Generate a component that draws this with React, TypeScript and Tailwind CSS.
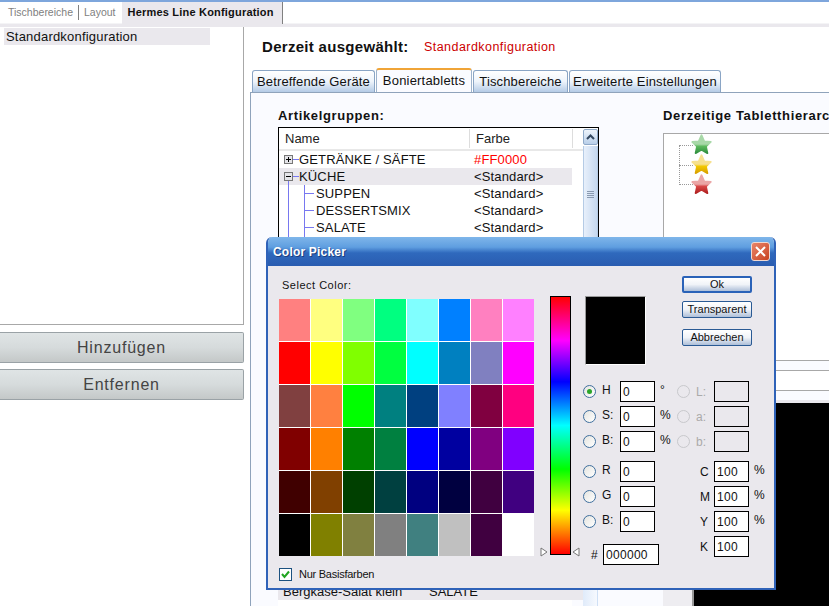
import type { ReactNode } from "react";

const swatches = [
  ["#ff8080", "#ffff80", "#80ff80", "#00ff80", "#80ffff", "#0080ff", "#ff80c0", "#ff80ff"],
  ["#ff0000", "#ffff00", "#80ff00", "#00ff40", "#00ffff", "#0080c0", "#8080c0", "#ff00ff"],
  ["#804040", "#ff8040", "#00ff00", "#008080", "#004080", "#8080ff", "#800040", "#ff0080"],
  ["#800000", "#ff8000", "#008000", "#008040", "#0000ff", "#0000a0", "#800080", "#8000ff"],
  ["#400000", "#804000", "#004000", "#004040", "#000080", "#000040", "#400040", "#400080"],
  ["#000000", "#808000", "#808040", "#808080", "#408080", "#c0c0c0", "#400040", "#ffffff"],
];

function Star({ id, light, mid, dark }: { id: string; light: string; mid: string; dark: string }) {
  return (
    <svg width="23" height="23" viewBox="0 0 21 21">
      <defs>
        <linearGradient id={id} x1="0" y1="0" x2="0" y2="1">
          <stop offset="0" stopColor={light} />
          <stop offset="0.5" stopColor={light} />
          <stop offset="0.62" stopColor={mid} />
          <stop offset="1" stopColor={dark} />
        </linearGradient>
      </defs>
      <path
        d="M10.5 2 L13 7.6 L19 8.2 L14.6 12.3 L15.9 18.4 L10.5 15.3 L5.1 18.4 L6.4 12.3 L2 8.2 L8 7.6 Z"
        fill={`url(#${id})`}
        stroke={`url(#${id})`}
        strokeWidth="1.6"
        strokeLinejoin="round"
      />
    </svg>
  );
}

function TopTab({ label, active }: { label: string; active?: boolean }) {
  if (active) {
    return (
      <div className="flex h-[22px] w-[161px] items-center border-r border-[#808080] bg-[#eae8ed] pl-[6px] text-[11px] font-bold tracking-[0.2px] text-[#111]">
        {label}
      </div>
    );
  }
  return <span className="text-[10.5px] text-[#808080]">{label}</span>;
}

function PanelTab({ label, width, active }: { label: string; width: number; active?: boolean }) {
  return (
    <div
      style={{ width }}
      className={
        active
          ? "flex h-[24px] items-start justify-center rounded-t-[3px] border-x border-t-2 border-x-[#9db3cc] border-t-[#f0a437] bg-[#fafbff] pt-[1px] text-[13px] tracking-[0.2px] text-[#111]"
          : "flex h-[22px] items-center justify-center rounded-t-[3px] border border-b-0 border-[#8aa5c5] bg-gradient-to-b from-white via-[#eef4fb] to-[#b4cbe6] text-[13px] tracking-[0.15px] text-[#111]"
      }
    >
      {label}
    </div>
  );
}

function BigButton({ label }: { label: string }) {
  return (
    <div className="flex h-[31px] items-center justify-center rounded-r-[2px] border border-l-0 border-[#9aa2a6] bg-gradient-to-b from-[#dfe4e5] via-[#d6dbdc] to-[#c4c8c8] text-[16px] tracking-[0.8px] text-[#444]">
      {label}
    </div>
  );
}

function TreeRow({
  label,
  color,
  level,
  toggle,
  selected,
  red,
}: {
  label?: string;
  color?: string;
  level: number;
  toggle?: string;
  selected?: boolean;
  red?: boolean;
}) {
  return (
    <div className={`relative flex h-[17px] w-[293px] items-center text-[13px] tracking-[0.15px] ${selected ? "bg-[#eae8ed]" : ""}`}>
      {toggle === "-" && <span className="absolute left-[9px] top-[9px] h-[8px] w-px bg-[#7878f0]" />}
      {level === 1 && (
        <>
          <span className="absolute left-[9px] top-0 h-[17px] w-px bg-[#7878f0]" />
          <span className="absolute left-[25px] top-0 h-[17px] w-px bg-[#7878f0]" />
          <span className="absolute left-[25px] top-[8px] h-px w-[10px] bg-[#7878f0]" />
        </>
      )}
      {toggle && (
        <>
          <span className="absolute left-[5px] top-[4px] flex h-[9px] w-[9px] items-center justify-center border border-[#777] bg-[#e4e4e8]">
            <span className="h-px w-[5px] bg-black" />
            {toggle === "+" && <span className="absolute h-[5px] w-px bg-black" />}
          </span>
          <span className="absolute left-[14px] top-[8px] h-px w-[6px] bg-[#7878f0]" />
        </>
      )}
      <span className={`w-[195px] shrink-0 whitespace-nowrap text-[#111] ${level === 1 ? "pl-[37px]" : "pl-[20px]"}`}>
        {label}
      </span>
      <span className={red ? "text-[#ff0000]" : "text-[#111]"}>{color}</span>
    </div>
  );
}

function Radio({ checked, disabled }: { checked?: boolean; disabled?: boolean }) {
  return (
    <span
      className={
        disabled
          ? "flex h-[13px] w-[13px] shrink-0 rounded-full border border-[#c8c8cc] bg-[#eae8ed]"
          : "flex h-[13px] w-[13px] shrink-0 items-center justify-center rounded-full border border-[#3f6f9e] bg-gradient-to-br from-[#e4e4e0] to-white"
      }
    >
      {checked && <span className="h-[5px] w-[5px] rounded-full bg-[#2aa52a]" />}
    </span>
  );
}

function Field({ value, className }: { value?: string; className?: string }) {
  return (
    <div className={`flex h-[21px] shrink-0 items-center border border-black pl-[2px] text-[12px] tracking-[0.3px] text-[#111] ${className ?? "w-[35px] bg-white"}`}>
      {value}
    </div>
  );
}

function ColorRow({ label, value, unit, checked }: { label: string; value: string; unit?: string; checked?: boolean }) {
  return (
    <div className="flex h-[21px] items-center">
      <Radio checked={checked} />
      <span className="w-[24px] shrink-0 pb-[3px] pl-[6px] text-[12px] text-[#111]">{label}</span>
      <Field value={value} />
      <span className="-mt-[4px] pl-[5px] text-[12px] text-[#111]">{unit}</span>
    </div>
  );
}

function DisabledRow({ label }: { label: string }) {
  return (
    <div className="flex h-[21px] items-center">
      <Radio disabled />
      <span className="w-[24px] shrink-0 pl-[6px] text-[12px] text-[#aaa]">{label}</span>
      <Field className="w-[35px] bg-[#eae8ed]" />
    </div>
  );
}

function CmykRow({ label, unit }: { label: string; unit?: string }) {
  return (
    <div className="flex h-[21px] items-center">
      <span className="w-[37px] shrink-0 pl-[23px] text-[12px] text-[#111]">{label}</span>
      <Field value="100" />
      <span className="-mt-[4px] pl-[5px] text-[12px] text-[#111]">{unit}</span>
    </div>
  );
}

function DialogButton({ children, primary }: { children: ReactNode; primary?: boolean }) {
  return (
    <div
      className={`flex h-[17px] w-[70px] items-center justify-center rounded-[2px] bg-gradient-to-b from-white via-[#f0f3f8] to-[#aebfd8] text-[11px] text-[#111] ${
        primary ? "border-2 border-[#2a62b8]" : "border border-[#2a5a94]"
      }`}
    >
      {children}
    </div>
  );
}

function ColorPicker() {
  return (
    <div className="absolute left-[266px] top-[237px] h-[353px] w-[510px] overflow-hidden rounded-t-[6px] border-2 border-t-0 border-[#2f62b8] bg-[#eae8ed] font-['Liberation_Sans',sans-serif]">
      <div className="flex h-[29px] items-center justify-between bg-[linear-gradient(#7fb6ea_0%,#5f9ee0_35%,#2f69bd_55%,#2a5cb0_100%)] pl-[5px] pr-[4px]">
        <span className="text-[12px] font-bold tracking-[0.2px] text-white [text-shadow:1px_1px_0_#1d3f7f]">Color Picker</span>
        <div className="flex h-[19px] w-[19px] items-center justify-center rounded-[3px] border border-[#f0d8d0] bg-gradient-to-br from-[#e8846a] to-[#c8401c]">
          <svg width="11" height="11" viewBox="0 0 11 11">
            <path d="M1 1 L10 10 M10 1 L1 10" stroke="white" strokeWidth="2" />
          </svg>
        </div>
      </div>
      <div className="flex pl-[11px]">
        <div className="w-[255px] shrink-0">
          <div className="flex h-[33px] items-center pl-[3px] pt-[6px] text-[11px] tracking-[0.5px] text-[#111]">Select Color:</div>
          <div className="grid grid-cols-8 gap-px bg-white">
            {swatches.flat().map((color, i) => (
              <div key={i} style={{ backgroundColor: color }} className="h-[42px]" />
            ))}
          </div>
          <div className="mt-[10px] flex items-center gap-[7px]">
            <span className="flex h-[13px] w-[13px] items-center justify-center border border-[#1c5180] bg-white">
              <svg width="9" height="9" viewBox="0 0 9 9">
                <path d="M1 4 L3.5 7 L8 1.5" fill="none" stroke="#22a522" strokeWidth="2" />
              </svg>
            </span>
            <span className="text-[11px] tracking-[-0.25px] text-[#111]">Nur Basisfarben</span>
          </div>
        </div>
        <div className="relative ml-[16px] mt-[30px] h-[259px] w-[21px] shrink-0 border border-black bg-[linear-gradient(#ff0000_0%,#ff00ff_17%,#0000ff_33%,#00ffff_50%,#00ff00_67%,#ffff00_83%,#ff0000_100%)]">
          <svg className="absolute -left-[11px] bottom-[-3px]" width="9" height="10" viewBox="0 0 9 10">
            <path d="M1 1 L7 5 L1 9 Z" fill="white" stroke="#777" />
          </svg>
          <svg className="absolute -right-[10px] bottom-[-3px]" width="9" height="10" viewBox="0 0 9 10">
            <path d="M8 1 L2 5 L8 9 Z" fill="white" stroke="#777" />
          </svg>
        </div>
        <div className="ml-[12px] mt-[10px] w-[190px] shrink-0">
          <div className="flex h-[105px]">
            <div className="ml-[2px] mt-[20px] h-[69px] w-[61px] border border-[#999] border-b-white border-r-white bg-black" />
            <div className="ml-[36px] flex flex-col">
              <DialogButton primary>Ok</DialogButton>
              <div className="mt-[8px]">
                <DialogButton>Transparent</DialogButton>
              </div>
              <div className="mt-[11px]">
                <DialogButton>Abbrechen</DialogButton>
              </div>
            </div>
          </div>
          <div className="flex">
            <div className="w-[94px] shrink-0">
              <div className="flex flex-col gap-[4px]">
                <ColorRow label="H" value="0" unit="°" checked />
                <ColorRow label="S:" value="0" unit="%" />
                <ColorRow label="B:" value="0" unit="%" />
              </div>
              <div className="mt-[9px] flex flex-col gap-[4px]">
                <ColorRow label="R" value="0" />
                <ColorRow label="G" value="0" />
                <ColorRow label="B:" value="0" />
              </div>
              <div className="mt-[12px] flex items-center pl-[8px]">
                <span className="w-[12px] text-[12px] text-[#111]">#</span>
                <Field value="000000" className="w-[56px] bg-white" />
              </div>
            </div>
            <div>
              <div className="flex flex-col gap-[4px]">
                <DisabledRow label="L:" />
                <DisabledRow label="a:" />
                <DisabledRow label="b:" />
              </div>
              <div className="mt-[9px] flex flex-col gap-[4px]">
                <CmykRow label="C" unit="%" />
                <CmykRow label="M" unit="%" />
                <CmykRow label="Y" unit="%" />
                <CmykRow label="K" />
              </div>
            </div>
          </div>
        </div>
      </div>
    </div>
  );
}

export default function App() {
  return (
    <div className="relative h-[606px] w-[829px] overflow-hidden bg-white font-['Liberation_Sans',sans-serif]">
      <div className="h-[2px] bg-[#7ea6dc]" />
      <div className="flex h-[22px] items-center border-b border-[#f4f4f6] pl-[8px]">
        <TopTab label="Tischbereiche" />
        <span className="mx-[5px] h-[15px] w-px bg-[#808080]" />
        <TopTab label="Layout" />
        <div className="ml-[6px]">
          <TopTab label="Hermes Line Konfiguration" active />
        </div>
      </div>
      <div className="h-[3px] bg-[#eae8ed]" />
      <div className="flex h-[579px]">
        <div className="w-[244px] shrink-0">
          <div className="h-[298px] border-b border-r border-[#a8a8a8] pl-[4px] pt-px">
            <div className="flex h-[17px] w-[206px] items-center bg-[#eae8ed] pl-[2px] text-[13px] tracking-[0.2px] text-[#111]">Standardkonfiguration</div>
          </div>
          <div className="mt-[7px] flex flex-col gap-[6px]">
            <BigButton label="Hinzufügen" />
            <BigButton label="Entfernen" />
          </div>
        </div>
        <div className="ml-[6px] flex min-w-0 flex-1 flex-col">
          <div className="flex h-[41px] shrink-0 items-center pl-[12px]">
            <span className="w-[162px] text-[15px] font-bold tracking-[0.3px] text-[#111]">Derzeit ausgewählt:</span>
            <span className="text-[12.5px] tracking-[0.45px] text-[#cc0000]">Standardkonfiguration</span>
          </div>
          <div className="flex h-[24px] shrink-0 items-end gap-px pl-[2px]">
            <PanelTab label="Betreffende Geräte" width={123} />
            <PanelTab label="Boniertabletts" width={96} active />
            <PanelTab label="Tischbereiche" width={95} />
            <PanelTab label="Erweiterte Einstellungen" width={152} />
          </div>
          <div className="flex min-h-0 flex-1 border-l border-t border-[#8fa3bb] bg-[#fafbff] pl-[27px] pt-[13px]">
            <div className="w-[321px] shrink-0">
              <div className="flex h-[21px] items-start text-[13px] font-bold tracking-[0.65px] text-[#111]">Artikelgruppen:</div>
              <div className="flex h-[380px] border border-black bg-white">
                <div className="w-[303px] shrink-0">
                  <div className="flex h-[23px] w-[304px] items-center border-b-2 border-[#e8e8e8] text-[13px] text-[#222]">
                    <span className="w-[191px] border-r border-[#ddd] pl-[6px]">Name</span>
                    <span className="w-[103px] border-r border-[#ddd] pl-[6px]">Farbe</span>
                  </div>
                  <TreeRow label="GETRÄNKE / SÄFTE" color="#FF0000" level={0} toggle="+" red />
                  <TreeRow label="KÜCHE" color="<Standard>" level={0} toggle="-" selected />
                  <TreeRow label="SUPPEN" color="<Standard>" level={1} />
                  <TreeRow label="DESSERTSMIX" color="<Standard>" level={1} />
                  <TreeRow label="SALATE" color="<Standard>" level={1} />
                  <TreeRow level={1} />
                </div>
                <div className="ml-px w-[15px] shrink-0">
                  <div className="mt-px flex h-[16px] items-center justify-center rounded-[2px] border border-[#8fa9c8] bg-gradient-to-b from-[#eef4fb] to-[#b9cfe9]">
                    <svg width="9" height="6" viewBox="0 0 9 6">
                      <path d="M1 5 L4.5 1.5 L8 5" fill="none" stroke="#33475f" strokeWidth="2" />
                    </svg>
                  </div>
                  <div className="relative mt-px h-[340px] border-x border-[#b5cbe5] bg-gradient-to-r from-[#e8f0fb] to-[#c6d8ef]">
                    <div className="absolute left-[3px] top-[45px] flex w-[7px] flex-col gap-px">
                      <span className="h-px bg-[#8a9ab0]" />
                      <span className="h-px bg-[#8a9ab0]" />
                      <span className="h-px bg-[#8a9ab0]" />
                      <span className="h-px bg-[#8a9ab0]" />
                    </div>
                  </div>
                </div>
              </div>
              <div className="mt-[76px] flex">
                <div className="w-[305px] shrink-0">
                  <div className="flex h-[17px] items-center bg-[#eae8ed] pl-[5px] text-[13px] text-[#111]">
                    <span className="w-[146px] whitespace-nowrap">Bergkäse-Salat klein</span>
                    <span>SALATE</span>
                  </div>
                  <div className="h-[10px] w-[294px] bg-white" />
                </div>
                <div className="h-[30px] w-[15px] shrink-0 border-r border-[#cfe0f5] bg-gradient-to-r from-[#e0ebfa] to-[#f6f9fe]" />
              </div>
            </div>
            <div className="ml-[64px] min-w-0 flex-1">
              <div className="flex h-[27px] items-start whitespace-nowrap text-[13px] font-bold tracking-[0.65px] text-[#111]">Derzeitige Tabletthierarchie</div>
              <div className="relative h-[227px] border-l border-t border-[#a8a8a8] bg-white">
                <div className="absolute left-[15px] top-[11px] h-[40px] w-[14px] border-y border-l border-dotted border-[#999]" />
                <div className="absolute left-[15px] top-[31px] h-0 w-[14px] border-t border-dotted border-[#999]" />
                <div className="absolute -top-px left-[26px] flex flex-col">
                  <div className="h-[20px]"><Star id="green" light="#a8d8a8" mid="#5cb85c" dark="#2f8f3f" /></div>
                  <div className="h-[20px]"><Star id="yellow" light="#f6e08e" mid="#f2c800" dark="#d8a000" /></div>
                  <div className="h-[20px]"><Star id="red" light="#eaa6a6" mid="#d84848" dark="#b02020" /></div>
                </div>
              </div>
              <div className="h-[10px] border-t border-[#a8a8a8] bg-[#fafbff]" />
              <div className="h-[21px] border-y border-[#a8a8a8] bg-white" />
              <div className="h-[9px] bg-[#fafbff]" />
              <div className="h-[3px] bg-[#eae8ed]" />
              <div className="h-[220px] bg-[#eeedf1] pl-[29px]">
                <div className="h-full border-l-2 border-[#999] bg-black" />
              </div>
            </div>
          </div>
        </div>
      </div>
      <ColorPicker />
    </div>
  );
}
